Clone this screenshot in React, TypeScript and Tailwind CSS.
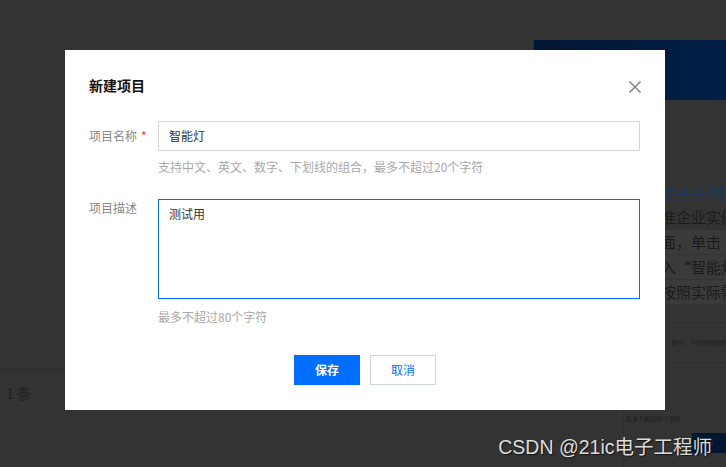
const cjk = "font-['Noto_Sans_CJK_SC','Noto_Sans',sans-serif]";

/**
 * Dimmed page that sits behind the dialog.
 */
function BackgroundPage() {
  return (
    <div className="flex h-full">
      {/* left list area */}
      <div className="flex w-[533px] flex-col">
        <div className="h-[369px]" />
        <div className="h-px w-[533px] bg-[#2b2b2b]" />
        <div className="pl-[6px] pt-[13px] text-[14px] leading-[20px] text-[#202020]">1 条</div>
      </div>

      {/* right guide screenshot */}
      <div className="flex flex-1 flex-col border-l border-[#2f2f2f] pt-[40px]">
        <div className="h-[60px] bg-gradient-to-r from-[#011633] to-[#022049]" />
        <div className="flex flex-col pl-[127px] pt-[81px] text-[15px] leading-[24px] whitespace-nowrap">
          <p className="text-[#1b3858]">发平台控制台</p>
          <p className="text-[#1b1b1b]">准企业实例</p>
          <p className="mt-[1px] bg-[#3a3a3a] text-[#1b1b1b]">面，单击</p>
          <p className="mt-[1px] bg-[#3a3a3a] text-[#1b1b1b]">入“智能灯</p>
          <p className="mt-[1px] bg-[#3a3a3a] text-[#1b1b1b]">按照实际需求</p>
        </div>
        <div className="ml-[89px] mt-[18px] flex flex-1 flex-col border-l border-t border-[#2e2e2e]">
          <div className="h-[40px] border-b border-[#2e2e2e] pl-[48px] pt-[16px] text-[6px] leading-[8px] text-[#1e1e1e] whitespace-nowrap">
            数字、下划线的组合，
          </div>
          <div className="pl-[2px] pt-[52px] text-[6px] leading-[8px] text-[#1e1e1e] whitespace-nowrap">
            最多不超过80个字符
          </div>
          <div className="ml-[68px] mt-[10px] h-[20px] w-[40px] bg-[#011633] pl-[10px] pt-[6px] text-[6px] leading-[8px] text-[#25324a]">
            保存
          </div>
        </div>
      </div>
    </div>
  );
}

function CloseIcon() {
  return (
    <svg width="14" height="14" viewBox="0 0 14 14" fill="none" stroke="#888888" strokeWidth="1.6">
      <path d="M1.5 1.5 L12.5 12.5 M12.5 1.5 L1.5 12.5" />
    </svg>
  );
}

/**
 * "新建项目" dialog
 */
function NewProjectDialog() {
  return (
    <div className="ml-[65px] mt-[50px] flex h-[360px] w-[600px] flex-col bg-white pl-[24px] pr-[25px] pt-[26px]">
      <div className="flex items-center justify-between">
        <h2 className="text-[14px] font-bold leading-[16px] text-[#111]">新建项目</h2>
        <button className="-mr-[2px] mt-[4px]">
          <CloseIcon />
        </button>
      </div>

      <div className="mt-[27px] flex">
        <label className="flex h-[30px] w-[69px] shrink-0 items-center text-[12px] text-[#888]">
          项目名称<span className="ml-[4px] text-[#e54545]">*</span>
        </label>
        <div className="flex flex-1 flex-col">
          <div className="flex h-[30px] items-center border border-[#cfd5de] px-[10px] text-[12px] text-[#333]">
            智能灯
          </div>
          <p className="mt-[7px] text-[12px] leading-[18px] text-[#a8a8a8]">
            支持中文、英文、数字、下划线的组合，最多不超过20个字符
          </p>
        </div>
      </div>

      <div className="mt-[23px] flex">
        <label className="w-[69px] shrink-0 text-[12px] leading-[18px] text-[#888]">项目描述</label>
        <div className="flex flex-1 flex-col">
          <div className="h-[100px] border border-[#006eff] px-[10px] pt-[5px] text-[12px] leading-[18px] text-[#333]">
            测试用
          </div>
          <p className="mt-[9px] text-[12px] leading-[18px] text-[#a8a8a8]">最多不超过80个字符</p>
        </div>
      </div>

      <div className="mt-[29px] flex justify-center gap-[10px] pl-[1px]">
        <button className="h-[30px] w-[66px] bg-[#006eff] text-[12px] font-bold text-white">保存</button>
        <button className="h-[30px] w-[66px] border border-[#cfd5de] bg-white text-[12px] text-[#006eff]">
          取消
        </button>
      </div>
    </div>
  );
}

export default function App() {
  return (
    <div className={`relative h-[467px] w-[726px] overflow-hidden bg-[#333333] ${cjk}`}>
      <BackgroundPage />
      <div className="absolute inset-0">
        <NewProjectDialog />
      </div>
      <div className="absolute bottom-[8px] right-[14px] font-['Liberation_Sans','Noto_Sans_CJK_SC',sans-serif] text-[19.5px] leading-[24px] text-[#dcdcdc] [text-shadow:1px_1px_1px_#111]">
        CSDN @21ic电子工程师
      </div>
    </div>
  );
}
